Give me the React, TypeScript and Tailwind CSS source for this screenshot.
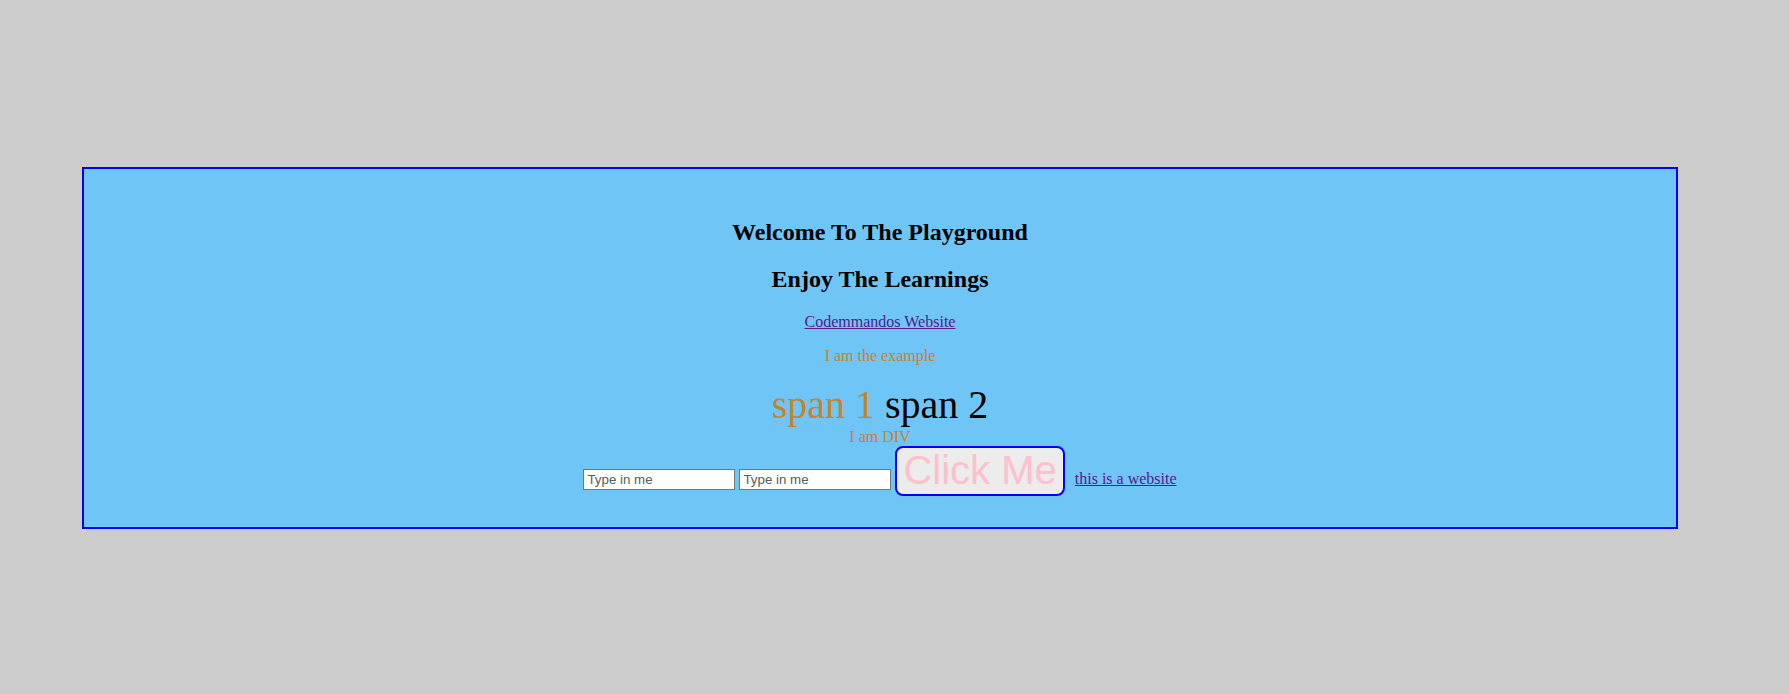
import React from "react";

const serif = { fontFamily: '"Liberation Serif", "Times New Roman", serif' };
const sans = { fontFamily: '"Liberation Sans", Arial, sans-serif' };

export default function App() {
  return (
    <div className="min-h-screen bg-[#cccccc] pt-[167px] pb-[10px]" style={serif}>
      <div className="ml-[82px] w-[1596px] border-2 border-[#0000ff] bg-[#6fc5f5] px-[30px] pt-[30px] pb-[31px] text-center text-[16px] leading-[normal] text-black">
        <h2 className="my-[19.92px] text-[24px] font-bold leading-[normal]">
          Welcome To The Playground
        </h2>
        <h2 className="my-[19.92px] text-[24px] font-bold leading-[normal]">
          Enjoy The Learnings
        </h2>
        <p className="my-[16px]">
          <a href="#" className="text-[#551a8b] underline">
            Codemmandos Website
          </a>
        </p>
        <p className="my-[16px] text-[#c8822c]">I am the example</p>
        <div className="text-[40px] leading-[normal]">
          <span className="text-[#c8822c]">span 1</span> <span>span 2</span>
        </div>
        <div className="text-[#c8822c]">I am DIV</div>
        <div className="whitespace-nowrap">
          <input
            type="text"
            placeholder="Type in me"
            className="h-[21px] w-[152px] border border-[#767676] bg-white px-[3px] align-baseline text-[13.33px] placeholder:text-[#5a5a5a]"
            style={sans}
          />{" "}
          <input
            type="text"
            placeholder="Type in me"
            className="h-[21px] w-[152px] border border-[#767676] bg-white px-[3px] align-baseline text-[13.33px] placeholder:text-[#5a5a5a]"
            style={sans}
          />{" "}
          <button
            className="h-[50px] whitespace-nowrap rounded-[8px] border-2 border-[#0000ff] bg-[#ececec] px-[6px] align-baseline text-[40px] leading-[normal] text-[#ffc0cb]"
            style={sans}
          >
            Click Me
          </button>{" "}
          <a href="#" className="ml-[6px] text-[#551a8b] underline">
            this is a website
          </a>
        </div>
      </div>
    </div>
  );
}
